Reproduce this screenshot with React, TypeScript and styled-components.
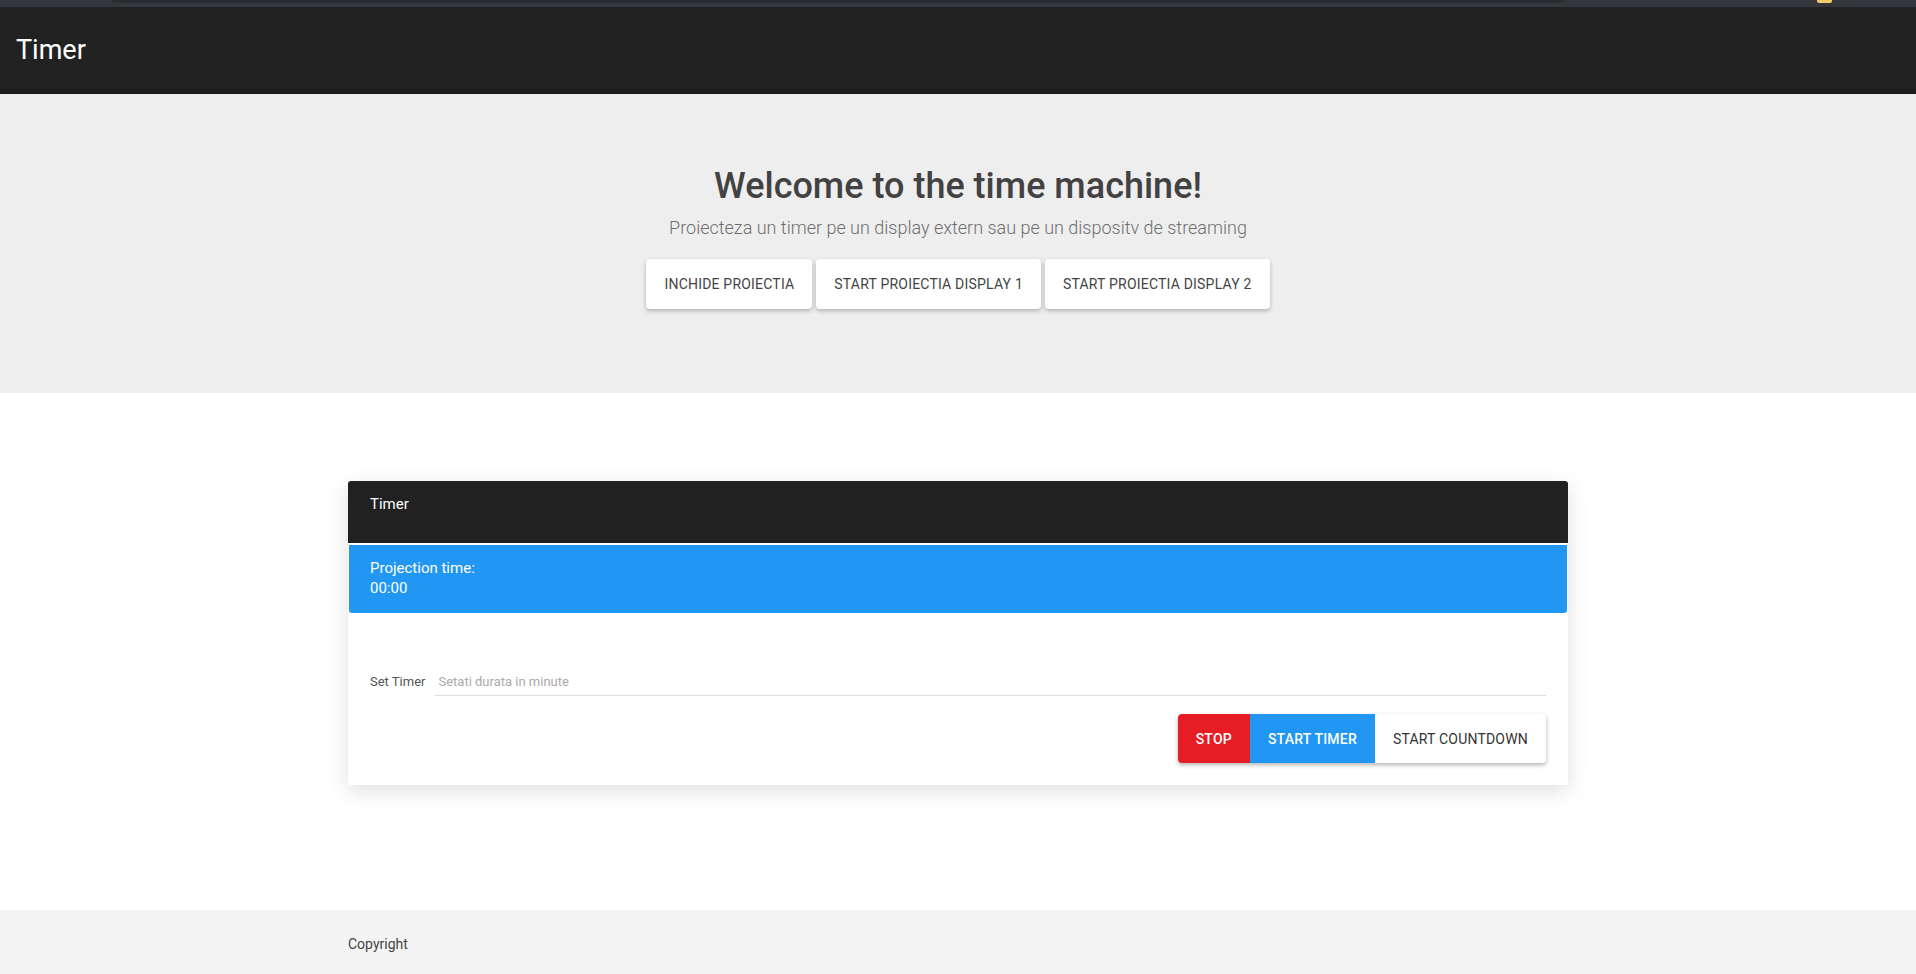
import styled, { createGlobalStyle } from 'styled-components';
import { useState } from 'react';

const GlobalStyle = createGlobalStyle`
  html, body {
    margin: 0;
    padding: 0;
  }
  body {
    font-family: Roboto, "Liberation Sans", Arial, sans-serif;
    background: #fff;
  }
  * {
    box-sizing: border-box;
  }
`;

export default function App() {
  const [minutes, setMinutes] = useState('');

  return (
    <Page>
      <GlobalStyle />
      <TopStrip>
        <TabBar />
        <Chip />
      </TopStrip>
      <Header>Timer</Header>
      <Hero>
        <Title>Welcome to the time machine!</Title>
        <Subtitle>Proiecteza un timer pe un display extern sau pe un dispositv de streaming</Subtitle>
        <HeroButtons>
          <HeroButton>Inchide proiectia</HeroButton>
          <HeroButton>Start proiectia display 1</HeroButton>
          <HeroButton>Start proiectia display 2</HeroButton>
        </HeroButtons>
      </Hero>
      <Main>
        <Card>
          <CardHeader>Timer</CardHeader>
          <Projection>
            <div>Projection time:</div>
            <div>00:00</div>
          </Projection>
          <CardBody>
            <FormRow>
              <Label htmlFor="minutes">Set Timer</Label>
              <Input
                id="minutes"
                placeholder="Setati durata in minute"
                value={minutes}
                onChange={(e) => setMinutes(e.target.value)}
              />
            </FormRow>
            <Actions>
              <ButtonGroup>
                <GroupButton variant="stop">Stop</GroupButton>
                <GroupButton variant="start">Start timer</GroupButton>
                <GroupButton variant="plain">Start countdown</GroupButton>
              </ButtonGroup>
            </Actions>
          </CardBody>
        </Card>
      </Main>
      <Footer>
        <FooterInner>Copyright</FooterInner>
      </Footer>
    </Page>
  );
}

const Page = styled.div`
  min-height: 100vh;
  display: flex;
  flex-direction: column;
`;

const TopStrip = styled.div`
  height: 7px;
  background: #33363a;
  display: flex;
  align-items: flex-start;
  padding-left: 112px;
`;

const TabBar = styled.div`
  width: 1452px;
  height: 3px;
  background: #292c30;
  border-radius: 0 0 6px 6px;
`;

const Chip = styled.div`
  width: 15px;
  height: 3px;
  margin-left: 253px;
  background: #f2cd6a;
  border-radius: 0 0 2px 2px;
`;

const Header = styled.header`
  height: 87px;
  background: #222222;
  box-shadow: inset 0 -5px 0 #1b1b1b;
  color: #fff;
  font-size: 27px;
  line-height: 32px;
  padding: 27px 16px 0;
`;

const Hero = styled.section`
  height: 299px;
  background: #eeeeee;
  text-align: center;
  padding-top: 70px;
`;

const Title = styled.h1`
  margin: 0;
  font-size: 36px;
  line-height: 44px;
  font-weight: 500;
  color: #424242;
`;

const Subtitle = styled.p`
  margin: 8px 0 0;
  font-size: 18px;
  line-height: 24px;
  font-weight: 300;
  color: #6e6e6e;
`;

const HeroButtons = styled.div`
  margin-top: 19px;
  display: flex;
  justify-content: center;
  gap: 4px;
`;

const HeroButton = styled.button`
  height: 50px;
  padding: 0 18px;
  border: none;
  border-radius: 4px;
  background: #fff;
  color: #444;
  font-family: inherit;
  font-size: 14px;
  letter-spacing: 0.2px;
  text-transform: uppercase;
  box-shadow: 0 2px 4px rgba(0, 0, 0, 0.25);
  cursor: pointer;
`;

const Main = styled.main`
  flex: 1;
  padding: 88px 0 125px;
`;

const Card = styled.div`
  width: 1220px;
  margin: 0 auto;
  background: #fff;
  border-radius: 3px;
  box-shadow: 0 6px 22px rgba(0, 0, 0, 0.13);
`;

const CardHeader = styled.div`
  height: 62px;
  padding: 13px 22px 0;
  background: #212121;
  color: #fff;
  font-size: 15px;
  line-height: 20px;
  border-radius: 3px 3px 0 0;
`;

const Projection = styled.div`
  margin: 2px 1px 0;
  height: 68px;
  padding: 13px 21px 0;
  background: #2196f3;
  color: #fff;
  font-size: 15px;
  line-height: 20px;
  border-radius: 0 0 3px 3px;
`;

const CardBody = styled.div`
  padding: 61px 22px 22px;
`;

const FormRow = styled.div`
  display: flex;
  align-items: baseline;
`;

const Label = styled.label`
  font-size: 13px;
  color: #555;
  margin-right: 10px;
`;

const Input = styled.input`
  flex: 1;
  border: none;
  border-bottom: 1px solid #dddddd;
  padding: 0 0 5px 3px;
  font-family: inherit;
  font-size: 13px;
  line-height: 16px;
  color: #333;
  outline: none;
  &::placeholder {
    color: #aaa;
  }
`;

const Actions = styled.div`
  margin-top: 18px;
  display: flex;
  justify-content: flex-end;
`;

const ButtonGroup = styled.div`
  display: flex;
  border-radius: 4px;
  overflow: hidden;
  box-shadow: 0 2px 4px rgba(0, 0, 0, 0.3);
`;

const groupColors = {
  stop: { bg: '#e71d25', fg: '#fff', weight: 500 },
  start: { bg: '#2196f3', fg: '#fff', weight: 500 },
  plain: { bg: '#fff', fg: '#333', weight: 400 },
};

const GroupButton = styled.button<{ variant: keyof typeof groupColors }>`
  height: 49px;
  padding: 0 18px;
  border: none;
  background: ${(p) => groupColors[p.variant].bg};
  color: ${(p) => groupColors[p.variant].fg};
  font-weight: ${(p) => groupColors[p.variant].weight};
  font-family: inherit;
  font-size: 14px;
  letter-spacing: 0.2px;
  text-transform: uppercase;
  cursor: pointer;
`;

const Footer = styled.footer`
  height: 64px;
  background: #f4f4f4;
`;

const FooterInner = styled.div`
  width: 1220px;
  margin: 0 auto;
  padding-top: 24px;
  font-size: 14px;
  line-height: 20px;
  color: #444;
`;
